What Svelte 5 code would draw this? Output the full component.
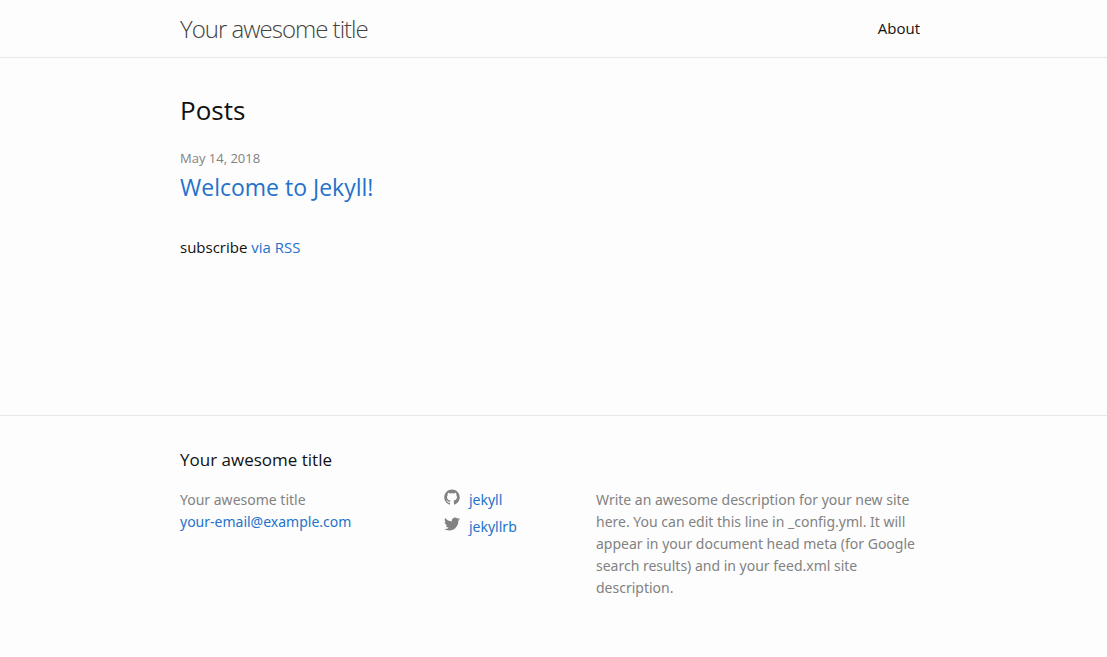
<script>
  const title = 'Your awesome title';
  const description =
    'Write an awesome description for your new site here. You can edit this line in _config.yml. It will appear in your document head meta (for Google search results) and in your feed.xml site description.';
</script>

<div class="page">
  <header>
    <div class="wrapper bar">
      <a class="site-title" href="/">{title}</a>
      <nav><a href="/about/">About</a></nav>
    </div>
  </header>

  <main>
    <div class="wrapper">
      <h1>Posts</h1>
      <ul class="posts">
        <li>
          <time datetime="2018-05-14">May 14, 2018</time>
          <h2><a href="/welcome-to-jekyll">Welcome to Jekyll!</a></h2>
        </li>
      </ul>
      <p class="rss">subscribe <a href="/feed.xml">via RSS</a></p>
    </div>
  </main>

  <footer>
    <div class="wrapper">
      <h3>{title}</h3>
      <div class="columns">
        <ul>
          <li>{title}</li>
          <li><a href="mailto:your-email@example.com">your-email@example.com</a></li>
        </ul>
        <ul class="social">
          <li>
            <a href="https://github.com/jekyll">
              <svg viewBox="0 0 16 16" aria-hidden="true"><path d="M7.999,0.431c-4.285,0-7.76,3.474-7.76,7.761 c0,3.428,2.223,6.337,5.307,7.363c0.388,0.071,0.53-0.168,0.53-0.374c0-0.184-0.007-0.672-0.01-1.32 c-2.159,0.469-2.614-1.04-2.614-1.04c-0.353-0.896-0.862-1.135-0.862-1.135c-0.705-0.481,0.053-0.472,0.053-0.472 c0.779,0.055,1.189,0.8,1.189,0.8c0.692,1.186,1.816,0.843,2.258,0.645c0.071-0.502,0.271-0.843,0.493-1.037 C4.86,11.425,3.049,10.76,3.049,7.786c0-0.847,0.302-1.54,0.799-2.082C3.768,5.507,3.501,4.718,3.924,3.65 c0,0,0.652-0.209,2.134,0.796C6.677,4.273,7.34,4.187,8,4.184c0.659,0.003,1.323,0.089,1.943,0.261 c1.482-1.004,2.132-0.796,2.132-0.796c0.423,1.068,0.157,1.857,0.077,2.054c0.497,0.542,0.798,1.235,0.798,2.082 c0,2.981-1.814,3.637-3.543,3.829c0.279,0.24,0.527,0.713,0.527,1.437c0,1.037-0.01,1.874-0.01,2.129 c0,0.208,0.14,0.449,0.534,0.373c3.081-1.028,5.302-3.935,5.302-7.362C15.76,3.906,12.285,0.431,7.999,0.431z"/></svg>
              <span>jekyll</span>
            </a>
          </li>
          <li>
            <a href="https://twitter.com/jekyllrb">
              <svg viewBox="0 0 16 16" aria-hidden="true"><path d="M15.969,3.058c-0.586,0.26-1.217,0.436-1.878,0.515c0.675-0.405,1.194-1.045,1.438-1.809c-0.632,0.375-1.332,0.647-2.076,0.793c-0.596-0.636-1.446-1.033-2.387-1.033c-1.806,0-3.27,1.464-3.27,3.27 c0,0.256,0.029,0.506,0.085,0.745C5.163,5.404,2.753,4.102,1.14,2.124C0.859,2.607,0.698,3.168,0.698,3.767 c0,1.134,0.577,2.135,1.455,2.722C1.616,6.472,1.112,6.325,0.671,6.08c0,0.014,0,0.027,0,0.041c0,1.584,1.127,2.906,2.623,3.206 C3.02,9.402,2.731,9.442,2.433,9.442c-0.211,0-0.416-0.021-0.615-0.059c0.416,1.299,1.624,2.245,3.055,2.271 c-1.119,0.877-2.529,1.4-4.061,1.4c-0.264,0-0.524-0.015-0.78-0.046c1.447,0.928,3.166,1.469,5.013,1.469 c6.015,0,9.304-4.983,9.304-9.304c0-0.142-0.003-0.283-0.009-0.423C14.976,4.29,15.531,3.714,15.969,3.058z"/></svg>
              <span>jekyllrb</span>
            </a>
          </li>
        </ul>
        <p>{description}</p>
      </div>
    </div>
  </footer>
</div>

<style>
  :global(body) { background: #fdfdfd; }
  .page {
    min-height: 100vh;
    display: flex;
    flex-direction: column;
    color: #111;
    font: 16px/24px "Open Sans", "Noto Sans", sans-serif;
  }
  h1, h2, h3, p, ul { margin: 0; padding: 0; font-weight: 400; list-style: none; }
  a { color: #2472ca; text-decoration: none; }
  a:hover { text-decoration: underline; }
  .wrapper { max-width: 740px; margin: 0 auto; padding: 0 34px 0 27px; }
  header { border-bottom: 1px solid #e8e8e8; }
  .bar { display: flex; justify-content: space-between; align-items: center; height: 57px; }
  .site-title { font-size: 24px; font-weight: 300; letter-spacing: -1px; color: #424242; }
  nav { margin-bottom: 2px; }
  nav a { color: #111; font-size: 15px; }
  main { padding: 30px 0; flex: 1; }
  h1 { font-size: 26px; line-height: 44px; margin-bottom: 15px; }
  time { display: block; font-size: 13px; line-height: 22px; color: #828282; }
  h2 { font-size: 23px; line-height: 36px; }
  .rss { margin-top: 30px; font-size: 15px; }
  footer { border-top: 1px solid #e8e8e8; padding: 30px 0 58px; }
  h3 { font-size: 17px; line-height: 28px; margin-bottom: 15px; }
  .columns { display: grid; grid-template-columns: 264px 152px 1fr; font-family: "Noto Sans", sans-serif; font-size: 14px; line-height: 22px; color: #828282; }
  .social a { display: flex; gap: 9px; margin-bottom: 5px; }
  svg { width: 16px; height: 16px; fill: #828282; }
</style>
